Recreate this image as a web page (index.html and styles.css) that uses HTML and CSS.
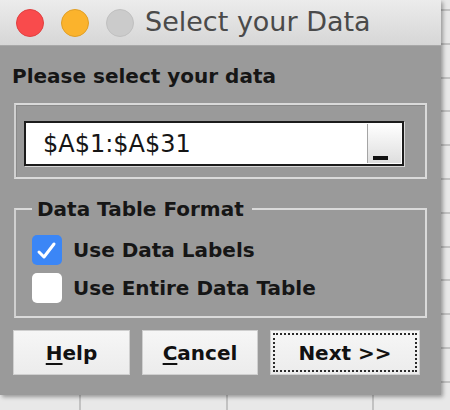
FILE: index.html
```html
<!DOCTYPE html>
<html>
<head>
<meta charset="utf-8">
<link rel="stylesheet" href="styles.css">
</head>
<body>
<div class="dialog">
  <div class="titlebar">
    <span class="light red"></span>
    <span class="light yellow"></span>
    <span class="light gray"></span>
    <span class="title">Select your Data</span>
  </div>
  <div class="content">
    <div class="prompt">Please select your data</div>
    <div class="group range-group">
      <div class="field">
        <span class="field-text">$A$1:$A$31</span>
        <span class="picker"><span class="picker-mark"></span></span>
      </div>
    </div>
    <fieldset class="format-group">
      <legend class="legend">Data Table Format</legend>
      <div class="row">
        <span class="check checked">
          <svg width="30" height="30" viewBox="0 0 30 30"><path d="M7 17 L12 22 L22 9" fill="none" stroke="#fff" stroke-width="3" stroke-linecap="round" stroke-linejoin="round"/></svg>
        </span>
        <span class="row-label">Use Data Labels</span>
      </div>
      <div class="row">
        <span class="check"></span>
        <span class="row-label">Use Entire Data Table</span>
      </div>
    </fieldset>
    <div class="buttons">
      <button class="btn btn-help"><u>H</u>elp</button>
      <button class="btn btn-cancel"><u>C</u>ancel</button>
      <button class="btn btn-next">Next &gt;&gt;</button>
    </div>
  </div>
</div>
</body>
</html>
```
FILE: styles.css
```css
html, body {
  margin: 0;
  padding: 0;
}
body {
  width: 450px;
  height: 410px;
  overflow: hidden;
  background-color: #e8e8e8;
  background-image:
    repeating-linear-gradient(to bottom, transparent 0 9px, #c2c2c2 9px 11px, transparent 11px 33.8px),
    repeating-linear-gradient(to right, transparent 0 79px, #c2c2c2 79px 81px, transparent 81px 146.5px);
  font-family: "DejaVu Sans", sans-serif;
}
.dialog {
  width: 441px;
  height: 395px;
  background: #9a9a9a;
  box-shadow: 2px 2px 4px rgba(0,0,0,0.35);
  display: flex;
  flex-direction: column;
}
.titlebar {
  height: 45px;
  border-bottom: 1px solid #a8a8a8;
  background: linear-gradient(to bottom, #ececec, #d6d6d6);
  display: flex;
  align-items: center;
  padding-left: 16px;
}
.light {
  width: 28px;
  height: 28px;
  border-radius: 50%;
  margin-right: 17px;
  box-sizing: border-box;
}
.red { background: #f94b4c; border: 1px solid #e04040; }
.yellow { background: #fbb32c; border: 1px solid #e09e25; }
.gray { background: #cbcbcb; border: 1px solid #c0c0c0; margin-right: 11px; }
.title {
  font-size: 27px;
  color: #4a4a4a;
  line-height: 30px;
  margin-top: -1px;
}
.content {
  padding: 18px 13px 0 13px;
  display: flex;
  flex-direction: column;
}
.prompt {
  font-weight: bold;
  font-size: 20px;
  line-height: 24px;
  color: #161616;
  margin-left: -1px;
}
.group {
  margin-top: 15px;
  border: 2px solid #dadada;
  border-left-color: #d0d0d0;
  box-shadow: inset 1px 1px 0 #8a8a8a;
}
.range-group {
  margin-left: 1px;
  width: 401px;
  padding: 16px 0 11px 8px;
}
.field {
  width: 380px;
  height: 45px;
  box-sizing: border-box;
  border: 2px solid #1c1c1c;
  background: #fff;
  display: flex;
  align-items: center;
  box-shadow: 1px 1px 0 #d8d8d8;
}
.field-text {
  flex: 1;
  padding-left: 17px;
  font-size: 24px;
  color: #151515;
  line-height: 28px;
}
.picker {
  width: 34px;
  height: 39px;
  margin-right: 1px;
  border-left: 1px solid #a5a5a5;
  background: linear-gradient(to bottom, #ffffff, #dedede);
  display: flex;
  align-items: flex-end;
  padding: 0 0 3px 5px;
  box-sizing: border-box;
}
.picker-mark {
  width: 15px;
  height: 4px;
  background: #111;
}
.format-group {
  margin: 18px 0 0 1px;
  width: 413px;
  box-sizing: border-box;
  padding: 10px 0 9px 16px;
  border: 2px solid #dadada;
  border-left-color: #d0d0d0;
  min-width: 0;
}
.legend {
  font-weight: bold;
  font-size: 20px;
  line-height: 24px;
  color: #161616;
  padding: 0 8px 0 5px;
  margin-left: 0;
}
.row {
  height: 38px;
  display: flex;
  align-items: center;
}
.check {
  width: 30px;
  height: 30px;
  border-radius: 5px;
  background: #fff;
  margin-right: 11px;
  display: block;
  flex: none;
}
.check svg { display: block; }
.checked {
  background: #3b86f6;
}
.row-label {
  font-weight: bold;
  font-size: 20px;
  line-height: 24px;
  color: #161616;
}
.buttons {
  margin-top: 12px;
  display: flex;
  gap: 12px;
}
.btn {
  height: 45px;
  font-family: "DejaVu Sans", sans-serif;
  font-weight: bold;
  font-size: 20px;
  color: #111;
  background: linear-gradient(to bottom, #f6f6f6, #ececec);
  border: 1px solid #cfcfcf;
  padding: 0;
  margin: 0;
}
.btn u { text-underline-offset: 3px; text-decoration-thickness: 2px; }
.btn-help { width: 117px; }
.btn-cancel { width: 116px; }
.btn-next {
  width: 150px;
  outline: 2px dotted #2a2a2a;
  outline-offset: -5px;
}
```
